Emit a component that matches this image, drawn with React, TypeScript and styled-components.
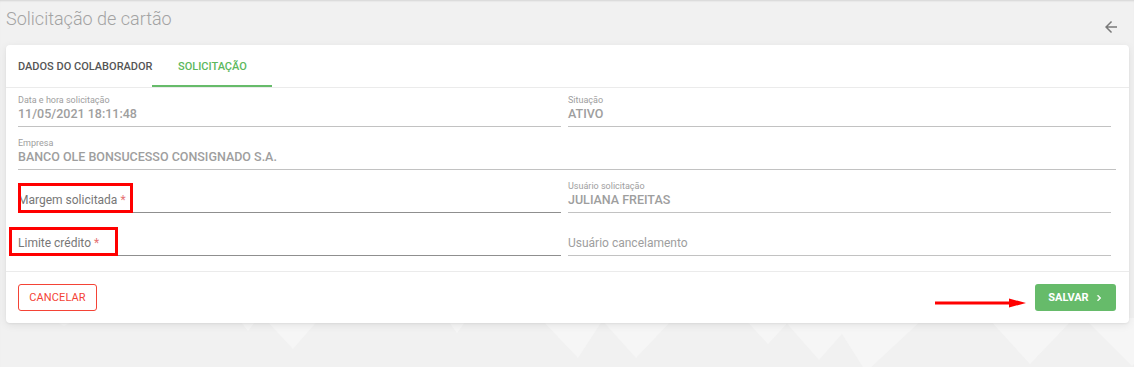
import React from "react";
import styled, { createGlobalStyle } from "styled-components";

const Global = createGlobalStyle`
  html, body { margin: 0; padding: 0; }
  body {
    background: #f1f1f1;
    font-family: Roboto, "Noto Sans", Arial, sans-serif;
    -webkit-font-smoothing: antialiased;
  }
  * { box-sizing: border-box; }
`;

const Page = styled.div`
  position: relative;
  width: 1134px;
  height: 367px;
  overflow: hidden;
  background: #f1f1f1;
  box-shadow: inset 0 2px 2px -1px rgba(0, 0, 0, 0.12);
`;

const Backdrop = styled.svg`
  position: absolute;
  left: 0;
  top: 0;
  width: 1134px;
  height: 367px;
  pointer-events: none;
`;

const Content = styled.div`
  position: relative;
  display: flex;
  flex-direction: column;
`;

const Header = styled.div`
  display: flex;
  justify-content: space-between;
  align-items: flex-start;
  height: 45px;
  padding: 8px 14px 0 6px;
`;

const Title = styled.h1`
  margin: 0;
  font-size: 18px;
  line-height: 22px;
  font-weight: 300;
  color: #a3a3a3;
`;

const BackButton = styled.button`
  display: flex;
  border: 0;
  padding: 0;
  margin-top: 10px;
  background: transparent;
  cursor: pointer;
`;

const Card = styled.div`
  margin: 0 5px 0 6px;
  background: #fff;
  border-radius: 4px;
  box-shadow: 0 2px 8px rgba(0, 0, 0, 0.08), 0 1px 2px rgba(0, 0, 0, 0.05);
`;

const TabBar = styled.div`
  display: flex;
  height: 43px;
  border-bottom: 1px solid #ebebeb;
`;

const Tab = styled.div<{ $active?: boolean; $width: number; $pad: number }>`
  display: flex;
  align-items: center;
  flex: none;
  width: ${(p) => p.$width}px;
  padding-left: ${(p) => p.$pad}px;
  font-size: 11px;
  font-weight: 500;
  white-space: nowrap;
  text-transform: uppercase;
  color: ${(p) => (p.$active ? "#5cb85c" : "#555")};
  border-bottom: 2px solid ${(p) => (p.$active ? "#66bb6a" : "transparent")};
  padding-top: 2px;
`;

const FieldGrid = styled.div`
  display: grid;
  grid-template-columns: 1fr 1fr;
  row-gap: 8px;
  padding: 4px 13px 15px 12px;
`;

const Cell = styled.div<{ $full?: boolean; $right?: boolean }>`
  position: relative;
  grid-column: ${(p) => (p.$full ? "1 / -1" : "auto")};
  padding-right: ${(p) => (p.$full ? 0 : p.$right ? 5 : 6)}px;
  padding-left: ${(p) => (p.$right ? 1 : 0)}px;
`;

const FieldBox = styled.div<{ $editable?: boolean }>`
  height: 35px;
  padding-top: 3px;
  border-bottom: 1px solid ${(p) => (p.$editable ? "#8f8f8f" : "#c2c2c2")};
`;

const Label = styled.div`
  height: 11px;
  font-size: 9px;
  line-height: 11px;
  color: #9e9e9e;
  white-space: nowrap;
`;

const Value = styled.div`
  font-size: 12.5px;
  line-height: 16px;
  font-weight: 500;
  color: #9e9e9e;
  white-space: nowrap;
`;

const Placeholder = styled.div<{ $dark?: boolean }>`
  margin-top: 11px;
  font-size: 12px;
  line-height: 16px;
  color: ${(p) => (p.$dark ? "#777" : "#9e9e9e")};
  white-space: nowrap;
`;

const Required = styled.span`
  color: #e57373;
  margin-left: 3px;
`;

const Highlight = styled.div<{ $l: number; $t: number; $w: number; $h: number }>`
  position: absolute;
  left: ${(p) => p.$l}px;
  top: ${(p) => p.$t}px;
  width: ${(p) => p.$w}px;
  height: ${(p) => p.$h}px;
  border: 3px solid #ff0000;
  pointer-events: none;
`;

const Footer = styled.div`
  display: flex;
  justify-content: space-between;
  align-items: center;
  border-top: 1px solid #ebebeb;
  padding: 12px 13px 12px 12px;
`;

const OutlineButton = styled.button`
  height: 27px;
  width: 79px;
  border: 1px solid #f44336;
  border-radius: 3px;
  background: #fff;
  color: #f44336;
  font-family: Roboto, Arial, sans-serif;
  font-size: 11px;
  font-weight: 400;
  letter-spacing: 0.1px;
  padding: 0;
  cursor: pointer;
`;

const SaveWrap = styled.div`
  position: relative;
`;

const SolidButton = styled.button`
  display: flex;
  align-items: center;
  justify-content: center;
  gap: 4px;
  height: 27px;
  width: 81px;
  border: 0;
  border-radius: 3px;
  background: #66bb6a;
  color: #fff;
  font-family: Roboto, Arial, sans-serif;
  font-size: 11px;
  font-weight: 700;
  padding: 0 0 0 2px;
  cursor: pointer;
`;

const Pointer = styled.svg`
  position: absolute;
  left: -100px;
  top: 13px;
`;

const triangles: [number, number, number, number][] = [
  [50, 78, 64, 326],
  [238, 258, 248, 331],
  [264, 320, 293, 349],
  [446, 468, 457, 333],
  [540, 604, 578, 358],
  [600, 674, 636, 358],
  [744, 792, 768, 344],
  [782, 856, 819, 360],
  [832, 924, 866, 372],
  [988, 1074, 1030, 364],
  [1084, 1180, 1132, 366],
];

export default function App() {
  return (
    <>
      <Global />
      <Page>
        <Backdrop viewBox="0 0 1134 367">
          {triangles.map(([a, b, tip, ty], i) => (
            <polygon key={i} points={`${a},318 ${b},318 ${tip},${ty}`} fill="#f6f6f6" />
          ))}
        </Backdrop>
        <Content>
          <Header>
            <Title>Solicitação de cartão</Title>
            <BackButton aria-label="Voltar">
              <svg width="18" height="18" viewBox="0 0 24 24">
                <path
                  d="M20 11H7.83l5.59-5.59L12 4l-8 8 8 8 1.41-1.41L7.83 13H20v-2z"
                  fill="#7a7a7a"
                />
              </svg>
            </BackButton>
          </Header>
          <Card>
            <TabBar>
              <Tab $width={146} $pad={12}>Dados do colaborador</Tab>
              <Tab $width={120} $pad={26} $active>Solicitação</Tab>
            </TabBar>
            <FieldGrid>
              <Cell>
                <FieldBox>
                  <Label>Data e hora solicitação</Label>
                  <Value>11/05/2021 18:11:48</Value>
                </FieldBox>
              </Cell>
              <Cell $right>
                <FieldBox>
                  <Label>Situação</Label>
                  <Value>ATIVO</Value>
                </FieldBox>
              </Cell>
              <Cell $full>
                <FieldBox>
                  <Label>Empresa</Label>
                  <Value>BANCO OLE BONSUCESSO CONSIGNADO S.A.</Value>
                </FieldBox>
              </Cell>
              <Cell>
                <FieldBox $editable>
                  <Placeholder $dark>
                    Margem solicitada<Required>*</Required>
                  </Placeholder>
                </FieldBox>
                <Highlight $l={0} $t={5} $w={115} $h={30} />
              </Cell>
              <Cell $right>
                <FieldBox>
                  <Label>Usuário solicitação</Label>
                  <Value>JULIANA FREITAS</Value>
                </FieldBox>
              </Cell>
              <Cell>
                <FieldBox $editable>
                  <Placeholder $dark>
                    Limite crédito<Required>*</Required>
                  </Placeholder>
                </FieldBox>
                <Highlight $l={-9} $t={6} $w={109} $h={29} />
              </Cell>
              <Cell $right>
                <FieldBox>
                  <Placeholder>Usuário cancelamento</Placeholder>
                </FieldBox>
              </Cell>
            </FieldGrid>
            <Footer>
              <OutlineButton>CANCELAR</OutlineButton>
              <SaveWrap>
                <Pointer width="92" height="12" viewBox="0 0 92 12">
                  <rect x="0" y="4.5" width="76" height="3" fill="#ff0000" />
                  <polygon points="74,1.5 91,6 74,10.5" fill="#ff0000" />
                </Pointer>
                <SolidButton>
                  SALVAR
                  <svg width="12" height="12" viewBox="0 0 24 24">
                    <path
                      d="M8.59 16.59L13.17 12 8.59 7.41 10 6l6 6-6 6z"
                      fill="#fff"
                      stroke="#fff"
                      strokeWidth="1"
                    />
                  </svg>
                </SolidButton>
              </SaveWrap>
            </Footer>
          </Card>
        </Content>
      </Page>
    </>
  );
}
